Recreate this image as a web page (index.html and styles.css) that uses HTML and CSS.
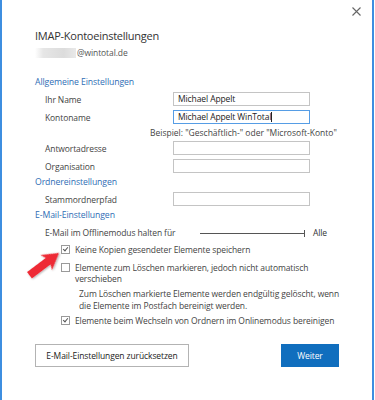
FILE: index.html
```html
<!DOCTYPE html>
<html lang="de">
<head>
    <meta charset="UTF-8" />
    <title>IMAP-Kontoeinstellungen</title>
    <link rel="stylesheet" href="styles.css">
</head>
<body>
    <div class="dialog">
        <div class="topbar">
            <svg class="close" width="9" height="9" viewBox="0 0 9 9">
                <path d="M0.5 0.5 L8.5 8.5 M8.5 0.5 L0.5 8.5" stroke="#666" stroke-width="1.1" fill="none"/>
            </svg>
        </div>

        <h1 class="title">IMAP-Kontoeinstellungen</h1>
        <div class="account"><span class="blur"></span>@wintotal.de</div>

        <h2 class="section first">Allgemeine Einstellungen</h2>
        <div class="row">
            <label>Ihr Name</label>
            <div class="field">Michael Appelt</div>
        </div>
        <div class="row">
            <label>Kontoname</label>
            <div class="field active">Michael Appelt WinTotal<span class="caret"></span></div>
        </div>
        <div class="hint">Beispiel: "Geschäftlich-" oder "Microsoft-Konto"</div>
        <div class="row tight">
            <label>Antwortadresse</label>
            <div class="field"></div>
        </div>
        <div class="row">
            <label>Organisation</label>
            <div class="field"></div>
        </div>

        <h2 class="section">Ordnereinstellungen</h2>
        <div class="row">
            <label>Stammordnerpfad</label>
            <div class="field"></div>
        </div>

        <h2 class="section mail">E-Mail-Einstellungen</h2>
        <div class="offline">
            <span class="offline-label">E-Mail im Offlinemodus halten für</span>
            <span class="slider"></span>
            <span class="slider-value">Alle</span>
        </div>

        <div class="check first-check">
            <span class="box checked"></span>
            <span>Keine Kopien gesendeter Elemente speichern</span>
        </div>
        <div class="check two-line">
            <span class="box"></span>
            <span>Elemente zum Löschen markieren, jedoch nicht automatisch<br>verschieben</span>
        </div>
        <p class="note">Zum Löschen markierte Elemente werden endgültig gelöscht, wenn<br>die Elemente im Postfach bereinigt werden.</p>
        <div class="check last-check">
            <span class="box checked"></span>
            <span>Elemente beim Wechseln von Ordnern im Onlinemodus bereinigen</span>
        </div>

        <div class="buttons">
            <button class="btn reset">E-Mail-Einstellungen zurücksetzen</button>
            <button class="btn primary">Weiter</button>
        </div>

        <!-- red marker arrow from the screenshot -->
        <svg class="marker" width="45" height="42" viewBox="0 0 45 42">
            <defs>
                <filter id="shade" x="-30%" y="-30%" width="160%" height="160%">
                    <feDropShadow dx="0.5" dy="1" stdDeviation="1" flood-color="#000" flood-opacity="0.35"/>
                </filter>
            </defs>
            <polygon transform="translate(38 12) rotate(-37)" filter="url(#shade)" fill="#ee2b35"
                points="0,0 -16,-9.5 -13.5,-4 -37,-4 -37,4 -13.5,4 -16,9.5"/>
        </svg>
    </div>
</body>
</html>
```

FILE: styles.css
```css
/* Page */
body {
    margin: 0;
    background: #ffffff;
    font-family: 'Open Sans', 'Noto Sans', Arial, sans-serif;
    font-size: 8.5px;
    letter-spacing: -0.1px;
    color: #444;
}

/* Dialog frame */
.dialog {
    position: relative;
    width: 374px;
    height: 400px;
    box-sizing: border-box;
    border-left: 2px solid #3d8ee0;
    border-right: 2px solid #3d8ee0;
    background: #fff;
    padding-left: 33px;
}

.topbar {
    height: 28px;
    display: flex;
    justify-content: flex-end;
    align-items: flex-start;
    padding-top: 7px;
    padding-right: 11px;
    box-sizing: border-box;
}

.title {
    margin: 0;
    font-size: 11px;
    font-weight: 400;
    letter-spacing: -0.25px;
    line-height: 16px;
    color: #333;
}

.account {
    margin-top: 3px;
    line-height: 12px;
    display: flex;
    align-items: center;
    color: #555;
}

.blur {
    display: inline-block;
    width: 41px;
    height: 10px;
    margin-right: 1px;
    background: linear-gradient(90deg, #fff 0%, #e6e6e6 20%, #dcdcdc 70%, #e9e9e9 100%);
}

/* Section headings */
.section {
    margin: 2px 0 0 0;
    font-size: 8.7px;
    font-weight: 400;
    line-height: 14px;
    color: #2f6db5;
}

.section.first {
    margin-top: 16px;
}

/* Label / input rows */
.row {
    display: flex;
    align-items: center;
    margin-top: 4px;
    padding-left: 10px;
}

.section + .row {
    margin-top: 3px;
}

.row.tight {
    margin-top: 2px;
}

.row label {
    width: 128px;
}

.field {
    width: 137px;
    height: 14px;
    box-sizing: border-box;
    border: 1px solid #c4c4c4;
    padding-left: 4px;
    line-height: 12px;
    color: #222;
    display: flex;
    align-items: center;
}

.field.active {
    border-color: #569de5;
}

.caret {
    display: inline-block;
    width: 1px;
    height: 10px;
    background: #222;
}

.hint {
    margin-top: 3px;
    padding-left: 115px;
    line-height: 12px;
    letter-spacing: 0;
}

/* Offline slider */
.offline {
    margin-top: 4px;
    padding-left: 10px;
    display: flex;
    align-items: center;
    line-height: 14px;
}

.offline-label {
    width: 155px;
}

.slider {
    position: relative;
    width: 105px;
    height: 1px;
    background: #555;
}

.slider::after {
    content: "";
    position: absolute;
    right: 0;
    top: -3px;
    width: 1px;
    height: 7px;
    background: #555;
}

.slider-value {
    margin-left: 8px;
    color: #333;
}

/* Checkboxes */
.check {
    display: flex;
    align-items: flex-start;
    padding-left: 26px;
    line-height: 12px;
    margin-top: 3px;
}

.check.first-check {
    margin-top: 4px;
}

.check.two-line {
    margin-top: 6px;
    line-height: 11px;
}

.box {
    flex: none;
    position: relative;
    width: 9px;
    height: 9px;
    box-sizing: border-box;
    border: 1px solid #9a9a9a;
    margin-top: 1px;
    margin-right: 5px;
}

.box.checked::after {
    content: "";
    position: absolute;
    left: 2px;
    top: 0px;
    width: 2px;
    height: 4px;
    border-right: 1px solid #555;
    border-bottom: 1px solid #555;
    transform: rotate(40deg);
}

.note {
    margin: 4px 0 0 0;
    padding-left: 44px;
    line-height: 12px;
}

/* Buttons */
.buttons {
    display: flex;
    justify-content: space-between;
    margin-top: 17px;
    width: 304px;
}

.btn {
    height: 23px;
    padding: 0;
    font-family: inherit;
    font-size: 8.5px;
    letter-spacing: -0.1px;
    white-space: nowrap;
    cursor: pointer;
}

.reset {
    width: 154px;
    background: #fff;
    border: 1px solid #b3b3b3;
    color: #222;
}

.primary {
    width: 58px;
    background: #106ebe;
    border: none;
    color: #fff;
}

/* Red annotation arrow */
.marker {
    position: absolute;
    left: 19px;
    top: 241px;
}
```
